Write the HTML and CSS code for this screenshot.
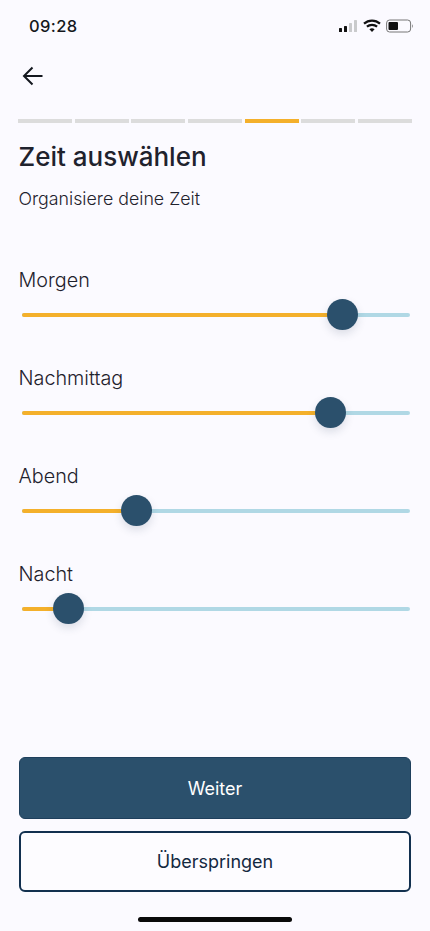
FILE: index.html
```html
<!DOCTYPE html>
<html lang="de">
<head>
<meta charset="utf-8">
<title>Zeit auswählen</title>
<link rel="stylesheet" href="styles.css">
</head>
<body>
<div class="screen">
  <div class="status">
    <span class="time">09:28</span>
    <div class="status-icons">
      <svg class="signal" width="20" height="14" viewBox="0 0 20 14">
        <rect x="1" y="9" width="3" height="4" rx=".6" fill="#111"/>
        <rect x="6" y="7" width="3" height="6" rx=".6" fill="#111"/>
        <rect x="11" y="4" width="3" height="9" rx=".6" fill="#c9cacc"/>
        <rect x="16" y="1" width="3" height="12" rx=".6" fill="#c9cacc"/>
      </svg>
      <svg class="wifi" width="18" height="14" viewBox="0 0 18 14">
        <path d="M1 4.6C5.6.5 12.4.5 17 4.6" fill="none" stroke="#111" stroke-width="2.2"/>
        <path d="M3.9 7.7C6.8 5.2 11.2 5.2 14.1 7.7" fill="none" stroke="#111" stroke-width="2.2"/>
        <path d="M6.4 10.2L9 13l2.6-2.8C10 9 8 9 6.4 10.2z" fill="#111"/>
      </svg>
      <svg class="battery" width="28" height="14" viewBox="0 0 28 14">
        <rect x=".6" y="1" width="24" height="12" rx="3" fill="none" stroke="#777" stroke-width="1"/>
        <rect x="2.5" y="3" width="9.500" height="8" rx="1" fill="#111"/>
        <path d="M26 5.200c1 .4 1 3.200 0 3.600z" fill="#777"/>
      </svg>
    </div>
  </div>

  <div class="nav">
    <svg width="24" height="24" viewBox="0 0 24 24"><path d="M21.500 12H3M11.500 3.500L3 12l8.500 8.500" fill="none" stroke="#14181f" stroke-width="2"/></svg>
  </div>

  <div class="progress">
    <span></span><span></span><span></span><span></span><span class="on"></span><span></span><span></span>
  </div>

  <h1>Zeit auswählen</h1>
  <p class="sub">Organisiere deine Zeit</p>

  <div class="sliders">
    <div class="row"><div class="label">Morgen</div>
      <div class="track"><div class="fill" style="width:82.500%"><i class="thumb"></i></div></div></div>
    <div class="row"><div class="label">Nachmittag</div>
      <div class="track"><div class="fill" style="width:79.500%"><i class="thumb"></i></div></div></div>
    <div class="row"><div class="label">Abend</div>
      <div class="track"><div class="fill" style="width:29.500%"><i class="thumb"></i></div></div></div>
    <div class="row"><div class="label">Nacht</div>
      <div class="track"><div class="fill" style="width:11.900%"><i class="thumb"></i></div></div></div>
  </div>

  <div class="actions">
    <div class="btn primary">Weiter</div>
    <div class="btn outline">Überspringen</div>
  </div>
  <div class="home"></div>
</div>
</body>
</html>
```

FILE: styles.css
```css
* { box-sizing: border-box; }
html, body { margin: 0; padding: 0; }
body { background: #fbfaff; font-family: Inter, "Liberation Sans", sans-serif; color: #1c202b; }
.screen { width: 430px; height: 931px; display: flex; flex-direction: column; overflow: hidden; }

.status { height: 52px; padding: 16px 16px 0 29px; display: flex; justify-content: space-between; align-items: flex-start; }
.time { font-size: 16.500px; font-weight: 500; line-height: 21px; color: #14171c; letter-spacing: .4px; }
.status-icons { display: flex; align-items: center; gap: 5px; margin-top: 3px; }

.nav { height: 48px; padding: 0 0 0 21px; display: flex; align-items: center; }

.progress { margin: 19px 0 0 18px; width: 394px; display: grid; grid-template-columns: repeat(7, 1fr); gap: 2.800px; }
.progress span { height: 3.500px; background: #dcdcdc; }
.progress .on { background: #f4b02b; }

h1 { margin: 17px 0 0 18.500px; font-size: 26px; font-weight: 500; line-height: 34px; color: #1f222d; }
.sub { margin: 14px 0 0 18.500px; font-size: 17.800px; font-weight: 300; line-height: 22px; color: #1f222d; }

.sliders { margin-top: 57px; padding: 0 19px 0; display: flex; flex-direction: column; gap: 26px; }
.row { height: 72px; }
.label { margin-left: -.5px; font-size: 19.800px; font-weight: 300; line-height: 26px; color: #1f222d; }
.track { margin: 20px 1px 0 3px; height: 4px; border-radius: 2px; background: #b0d8e5; position: relative; }
.fill { height: 4px; border-radius: 2px; background: #f4b02b; position: relative; }
.thumb { position: absolute; right: -15.500px; top: -13.500px; width: 31px; height: 31px; border-radius: 50%; background: #2b506c; box-shadow: 0 4px 8px rgba(40, 60, 90, .15); }

.actions { margin: auto 19px 0; display: flex; flex-direction: column; gap: 12px; }
.btn { height: 62px; border-radius: 6px; display: flex; align-items: center; justify-content: center; font-size: 18px; font-weight: 400; }
.primary { background: #2b506c; color: #fff; border: 1px solid #1e3f5c; }
.outline { height: 61px; background: #fdfcff; color: #14293f; border: 2px solid #12304f; }
.home { width: 154px; height: 5px; margin: 25px auto 9px; border-radius: 3px; background: #0a0a0a; }
```
